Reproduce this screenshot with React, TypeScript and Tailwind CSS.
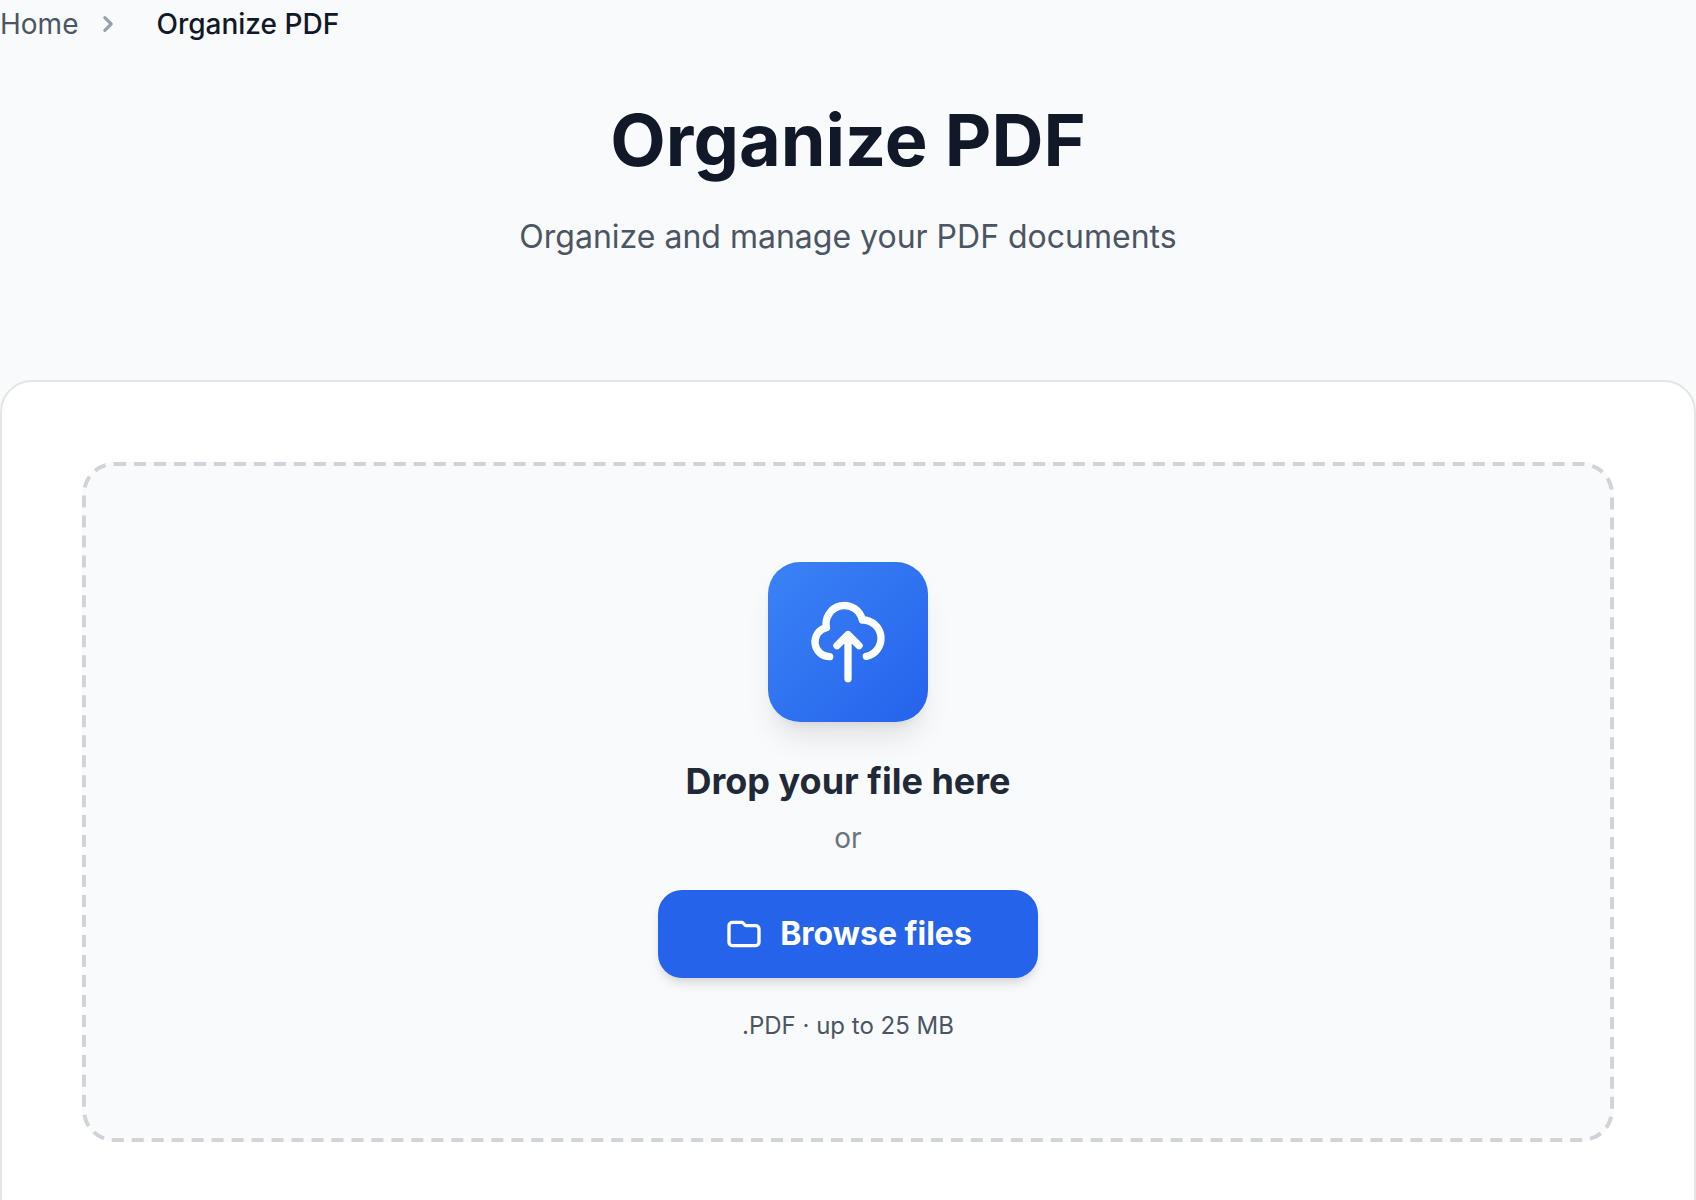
import React from 'react';

const FILE_TYPES = '.PDF';
const MAX_SIZE_MB = 25;

function ChevronIcon() {
  return (
    <svg className="w-8 h-8 shrink-0 text-gray-400" viewBox="0 0 20 20" fill="currentColor" aria-hidden="true">
      <path
        fillRule="evenodd"
        clipRule="evenodd"
        d="M7.293 14.707a1 1 0 010-1.414L10.586 10 7.293 6.707a1 1 0 011.414-1.414l4 4a1 1 0 010 1.414l-4 4a1 1 0 01-1.414 0z"
      />
    </svg>
  );
}

function CloudUploadIcon() {
  return (
    <svg
      className="w-22 h-22 text-white"
      viewBox="0 0 24 24"
      fill="none"
      stroke="currentColor"
      strokeWidth={2}
      strokeLinecap="round"
      strokeLinejoin="round"
      aria-hidden="true"
    >
      <path d="M7 16a4 4 0 01-.88-7.903A5 5 0 1115.9 6L16 6a5 5 0 011 9.9M15 13l-3-3m0 0l-3 3m3-3v12" />
    </svg>
  );
}

function FolderIcon() {
  return (
    <svg
      className="w-10 h-10 shrink-0"
      viewBox="0 0 24 24"
      fill="none"
      stroke="currentColor"
      strokeWidth={2}
      strokeLinecap="round"
      strokeLinejoin="round"
      aria-hidden="true"
    >
      <path d="M3 7v10a2 2 0 002 2h14a2 2 0 002-2V9a2 2 0 00-2-2h-6l-2-2H5a2 2 0 00-2 2z" />
    </svg>
  );
}

// CSS dashed borders give no control over dash length, so the outline is stroked here
function DashedOutline() {
  return (
    <svg
      className="pointer-events-none absolute inset-0.5 h-[calc(100%-4px)] w-[calc(100%-4px)] overflow-visible text-[#d1d3d9]"
      fill="none"
      aria-hidden="true"
    >
      <rect width="100%" height="100%" rx="30" stroke="currentColor" strokeWidth={4} strokeDasharray="12 7.98" />
    </svg>
  );
}

export default function App() {
  return (
    <div className="min-h-screen overflow-x-hidden bg-[#f9fafc] font-['Inter',sans-serif] text-[#111827]">
      <nav aria-label="Breadcrumb">
        <ol className="flex items-center gap-3.5 text-[28px] leading-[48px]">
          <li>
            <a href="#" className="text-[#4b5563] hover:text-blue-600">Home</a>
          </li>
          <li className="flex items-center gap-4">
            <ChevronIcon />
            <span className="ml-4 font-medium" aria-current="page">Organize PDF</span>
          </li>
        </ol>
      </nav>

      <header className="pt-12 pb-[114px] text-center">
        <h1 className="text-[72px] leading-[88px] font-bold">Organize PDF</h1>
        <p className="mt-6 text-[32px] leading-[58px] text-[#4b5563]">Organize and manage your PDF documents</p>
      </header>

      <main className="rounded-[32px] border-2 border-[#e5e5e5] bg-white px-20 pt-20 pb-28">
        <div className="relative flex flex-col items-center rounded-[32px] bg-[#f9fafc] py-25 text-center">
          <DashedOutline />
          <div className="flex w-40 h-40 items-center justify-center rounded-[32px] bg-linear-to-br from-[#3b82f6] to-[#2563eb] shadow-[0_20px_30px_-6px_rgba(0,0,0,0.1),0_8px_12px_-8px_rgba(0,0,0,0.1)]">
            <CloudUploadIcon />
          </div>
          <h2 className="mt-8 text-[36px] leading-[54px] font-bold text-[#1f2937]">Drop your file here</h2>
          <p className="mt-2.5 text-[28px] leading-[40px] text-[#6b7280]">or</p>
          <button
            type="button"
            className="mt-8 inline-flex min-w-[380px] items-center justify-center gap-4 rounded-3xl bg-[#2563eb] px-12 py-5 text-[32px] leading-[48px] font-bold text-white shadow-[0_8px_12px_-2px_rgba(0,0,0,0.1),0_4px_8px_-4px_rgba(0,0,0,0.1)] hover:bg-blue-700"
          >
            <FolderIcon />
            Browse files
          </button>
          <p className="mt-8 text-[24px] leading-[32px] text-[#4b5563]">
            {FILE_TYPES} · up to {MAX_SIZE_MB} MB
          </p>
        </div>
      </main>
    </div>
  );
}
